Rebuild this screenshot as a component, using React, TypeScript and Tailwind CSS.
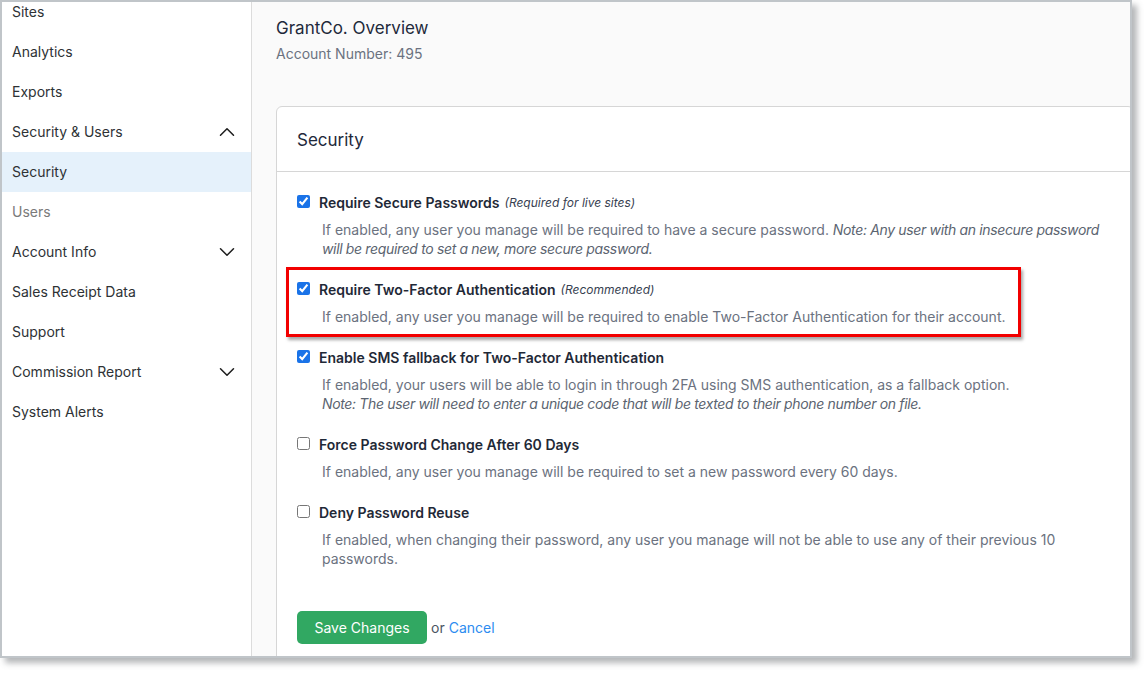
import ChevronDownIcon from "lucide-react/dist/esm/icons/chevron-down.js";
import ChevronUpIcon from "lucide-react/dist/esm/icons/chevron-up.js";
import type { ReactNode } from "react";

type NavItem = {
  label: string;
  caret?: "up" | "down";
  active?: boolean;
  muted?: boolean;
};

const navItems: NavItem[] = [
  { label: "Sites" },
  { label: "Analytics" },
  { label: "Exports" },
  { label: "Security & Users", caret: "up" },
  { label: "Security", active: true },
  { label: "Users", muted: true },
  { label: "Account Info", caret: "down" },
  { label: "Sales Receipt Data" },
  { label: "Support" },
  { label: "Commission Report", caret: "down" },
  { label: "System Alerts" },
];

type Setting = {
  label: string;
  tag?: string;
  checked: boolean;
  highlight?: boolean;
  body: ReactNode;
};

const settings: Setting[] = [
  {
    label: "Require Secure Passwords",
    tag: "(Required for live sites)",
    checked: true,
    body: (
      <>
        If enabled, any user you manage will be required to have a secure password.{" "}
        <em className="tracking-[-0.35px] text-[#5b6470]">
          Note: Any user with an insecure password will be required to set a new, more secure
          password.
        </em>
      </>
    ),
  },
  {
    label: "Require Two-Factor Authentication",
    tag: "(Recommended)",
    checked: true,
    highlight: true,
    body: "If enabled, any user you manage will be required to enable Two-Factor Authentication for their account.",
  },
  {
    label: "Enable SMS fallback for Two-Factor Authentication",
    checked: true,
    body: (
      <>
        If enabled, your users will be able to login in through 2FA using SMS authentication, as a
        fallback option.
        <br />
        <em className="tracking-[-0.35px] text-[#5b6470]">
          Note: The user will need to enter a unique code that will be texted to their phone number
          on file.
        </em>
      </>
    ),
  },
  {
    label: "Force Password Change After 60 Days",
    checked: false,
    body: "If enabled, any user you manage will be required to set a new password every 60 days.",
  },
  {
    label: "Deny Password Reuse",
    checked: false,
    body: "If enabled, when changing their password, any user you manage will not be able to use any of their previous 10 passwords.",
  },
];

function SettingRow({ setting }: { setting: Setting }) {
  return (
    <div className="relative mb-[22px]">
      {setting.highlight && (
        <div className="pointer-events-none absolute left-[-11px] top-[-13px] h-[70px] w-[735px] border-[3px] border-[#f20000] shadow-[2px_3px_3px_rgba(0,0,0,0.35)]" />
      )}
      <label className="flex h-5 items-center">
        <input
          type="checkbox"
          defaultChecked={setting.checked}
          className="m-0 mt-[-3px] h-[13px] w-[13px] accent-[#1a73e8]"
        />
        <span className="ml-[9px] text-sm font-semibold text-[#1f2937]">{setting.label}</span>
        {setting.tag && (
          <span className="ml-[5px] text-xs italic text-[#374151]">{setting.tag}</span>
        )}
      </label>
      <p className="mt-[7px] w-[802px] pl-[25px] text-sm leading-[19px] text-[#6b7280]">
        {setting.body}
      </p>
    </div>
  );
}

export default function App() {
  return (
    <div
      className="h-[673px] w-[1146px] overflow-hidden bg-white"
      style={{ fontFamily: "Inter, 'Noto Sans', sans-serif" }}
    >
      <div className="flex h-[658px] w-[1132px] overflow-hidden border-2 border-[#c0c5c9] shadow-[5px_5px_6px_rgba(90,95,100,0.45)]">
        <aside className="w-[250px] shrink-0 overflow-hidden border-r border-[#dcdcdc] bg-white">
          <nav className="mt-[-10px]">
            {navItems.map((item) => (
              <div
                key={item.label}
                className={`flex h-10 items-center justify-between pl-[10px] pr-[11px] text-sm ${
                  item.active ? "bg-[#e5f1fb]" : ""
                } ${item.muted ? "text-[#7a7a7a]" : "text-[#2e3235]"}`}
              >
                <span>{item.label}</span>
                {item.caret === "up" && (
                  <ChevronUpIcon width={26} height={26} strokeWidth={1.4} className="text-[#1f1f1f]" />
                )}
                {item.caret === "down" && (
                  <ChevronDownIcon width={26} height={26} strokeWidth={1.4} className="text-[#1f1f1f]" />
                )}
              </div>
            ))}
          </nav>
        </aside>

        <main className="min-w-0 flex-1 overflow-hidden bg-[#fafafa] pl-6 pt-[14px]">
          <h1 className="text-[17px] leading-6 text-[#1e293b]">GrantCo. Overview</h1>
          <p className="mt-[4px] text-sm leading-5 text-[#6b7280]">Account Number: 495</p>

          <section className="mt-[42px] w-[858px] rounded-md border border-[#d6d6d6] bg-white pb-16">
            <header className="border-b border-[#d6d6d6] px-5 pb-[19px] pt-[21px]">
              <h2 className="text-[17px] leading-6 text-[#1e293b]">Security</h2>
            </header>
            <div className="pl-5 pt-[21px]">
              {settings.map((setting) => (
                <SettingRow key={setting.label} setting={setting} />
              ))}

              <div className="mt-[43px] flex items-center">
                <button
                  type="button"
                  className="h-[33px] w-[130px] rounded-[5px] bg-[#31a862] text-sm text-white"
                >
                  Save Changes
                </button>
                <span className="ml-[4px] text-sm text-[#4b5563]">or</span>
                <a href="#" className="ml-[4px] text-sm text-[#2d8cf0]">
                  Cancel
                </a>
              </div>
            </div>
          </section>
        </main>
      </div>
    </div>
  );
}
